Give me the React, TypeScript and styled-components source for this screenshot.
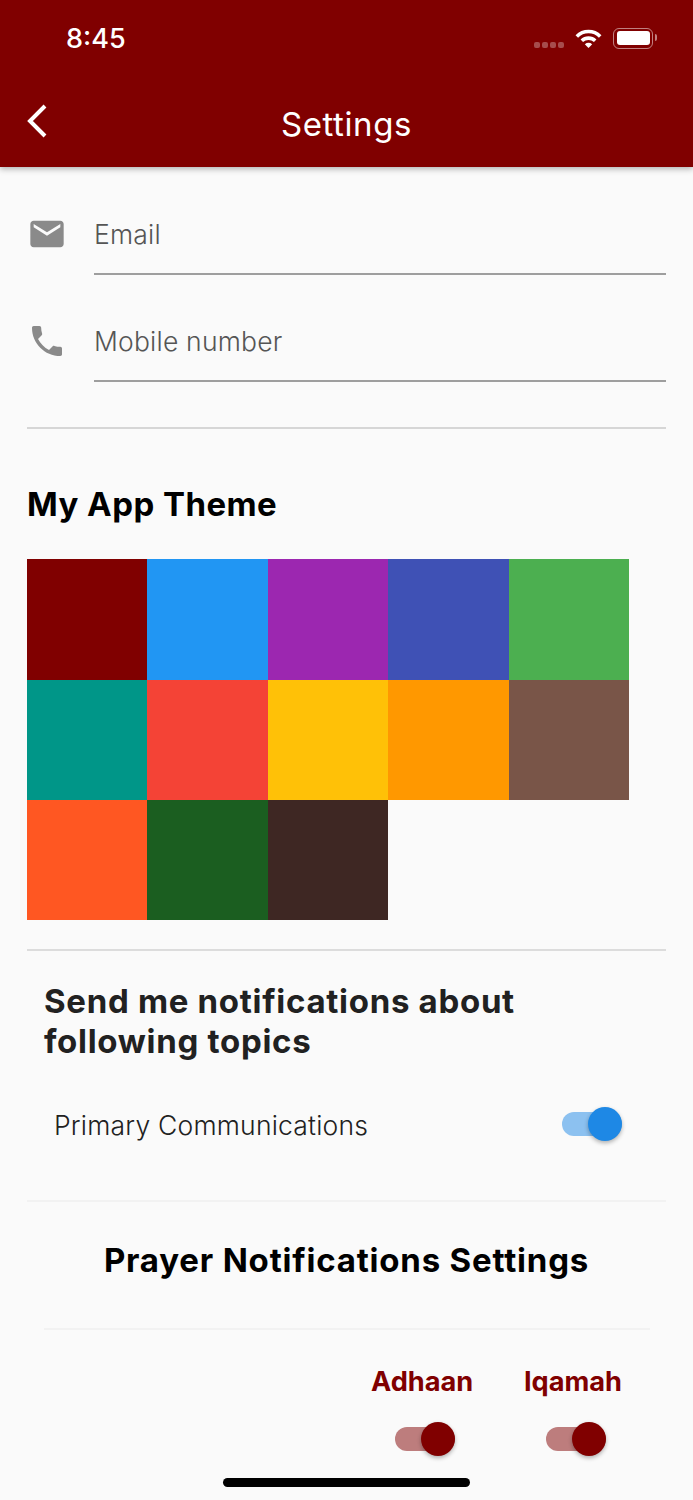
import React from 'react';
import styled, { createGlobalStyle } from 'styled-components';
import { MdEmail, MdPhone } from 'react-icons/md';

const MAROON = '#800000';
const BLUE = '#1e88e5';

const themeColors = [
    '#800000', '#2196f3', '#9c27b0', '#3f51b5', '#4caf50',
    '#009688', '#f44336', '#ffc107', '#ff9800', '#795548',
    '#ff5722', '#1b5e20', '#3e2723',
];

const Toggle: React.FC<{ color: string }> = ({ color }) => (
    <ToggleWrapper>
        <ToggleTrack $color={color} />
        <ToggleThumb $color={color} />
    </ToggleWrapper>
);

const Field: React.FC<{ icon: React.ReactNode; label: string }> = ({ icon, label }) => (
    <FieldRow>
        <FieldIcon>{icon}</FieldIcon>
        <FieldInput>{label}</FieldInput>
    </FieldRow>
);

const App: React.FC = () => {
    return (
        <Page>
            <GlobalStyle />
            <Header>
                <StatusBar>
                    <Time>8:45</Time>
                    <StatusIcons>
                        <Signal>
                            <i /><i /><i /><i />
                        </Signal>
                        <svg width="27" height="19" viewBox="0 0 27 19">
                            <path d="M1.800 7.400A16.500 16.500 0 0 1 25.200 7.400" fill="none" stroke="#fff" strokeWidth="3.600" />
                            <path d="M6.800 11.800A9.700 9.700 0 0 1 20.200 11.800" fill="none" stroke="#fff" strokeWidth="3.600" />
                            <path d="M13.500 19L9.800 15.200Q13.500 12.400 17.200 15.200Z" fill="#fff" />
                        </svg>
                        <Battery>
                            <BatteryFill />
                        </Battery>
                    </StatusIcons>
                </StatusBar>
                <Toolbar>
                    <BackIcon width="22" height="36" viewBox="0 0 22 36">
                        <path d="M19 3L4 18l15 15" fill="none" stroke="#fff" strokeWidth="4" />
                    </BackIcon>
                    <Title>Settings</Title>
                </Toolbar>
            </Header>

            <Content>
                <Field icon={<MdEmail />} label="Email" />
                <Field icon={<MdPhone />} label="Mobile number" />
                <Divider $top={45} $color="#d6d6d6" />

                <ThemeTitle>My App Theme</ThemeTitle>
                <Swatches>
                    {themeColors.map((color) => (
                        <Swatch key={color} $color={color} />
                    ))}
                </Swatches>
                <Divider $top={29} $color="#dcdcdc" />

                <TopicsTitle>Send me notifications about following topics</TopicsTitle>
                <TopicRow>
                    <TopicLabel>Primary Communications</TopicLabel>
                    <Toggle color={BLUE} />
                </TopicRow>
                <Divider $top={0} $color="#f2f2f2" />

                <PrayerTitle>Prayer Notifications Settings</PrayerTitle>
                <InnerDivider />
                <PrayerHead>
                    <PrayerColumn>Adhaan</PrayerColumn>
                    <PrayerColumn>Iqamah</PrayerColumn>
                </PrayerHead>
                <PrayerToggles>
                    <ToggleCell>
                        <Toggle color={MAROON} />
                    </ToggleCell>
                    <ToggleCell>
                        <Toggle color={MAROON} />
                    </ToggleCell>
                </PrayerToggles>
            </Content>
            <HomeIndicator />
        </Page>
    );
};

export default App;

const GlobalStyle = createGlobalStyle`
    html, body {
        margin: 0;
        padding: 0;
        background: #fafafa;
    }
`;

const Page = styled.div`
    position: relative;
    width: 693px;
    height: 1500px;
    overflow: hidden;
    background: #fafafa;
    font-family: Inter, Roboto, "Liberation Sans", sans-serif;
    color: #212121;
`;

const Header = styled.header`
    height: 167px;
    background: ${MAROON};
    box-shadow: 0 2px 6px rgba(0, 0, 0, 0.3);
    color: #fff;
`;

const StatusBar = styled.div`
    height: 76px;
    box-sizing: border-box;
    display: flex;
    align-items: center;
    justify-content: space-between;
    padding: 0 40px 0 66px;
`;

const Time = styled.span`
    font-size: 27px;
    font-weight: 500;
`;

const StatusIcons = styled.div`
    display: flex;
    align-items: center;
    gap: 11px;
`;

const Signal = styled.div`
    display: flex;
    gap: 2px;
    margin-top: 14px;
    i {
        display: block;
        width: 6px;
        height: 6px;
        border-radius: 2px;
        background: rgba(255, 255, 255, 0.3);
    }
`;

const Battery = styled.div`
    position: relative;
    width: 40px;
    height: 21px;
    box-sizing: border-box;
    padding: 2.5px;
    border: 1.5px solid rgba(255, 255, 255, 0.5);
    border-radius: 6px;
    &::after {
        content: '';
        position: absolute;
        right: -5px;
        top: 5px;
        width: 2px;
        height: 7px;
        border-radius: 0 2px 2px 0;
        background: rgba(255, 255, 255, 0.5);
    }
`;

const BatteryFill = styled.div`
    height: 100%;
    background: #fff;
    border-radius: 3px;
`;

const Toolbar = styled.div`
    position: relative;
    height: 91px;
    display: flex;
    align-items: center;
    justify-content: center;
`;

const BackIcon = styled.svg`
    position: absolute;
    left: 26px;
    top: 27px;
`;

const Title = styled.h1`
    margin: 5px 0 0;
    font-size: 33px;
    font-weight: 400;
    letter-spacing: 0.6px;
`;

const Content = styled.main`
    padding: 1px 27px 0;
`;

const FieldRow = styled.div`
    display: flex;
    height: 107px;
    align-items: flex-end;
`;

const FieldIcon = styled.div`
    width: 67px;
    height: 107px;
    padding: 46px 0 0 0;
    box-sizing: border-box;
    color: #8a8a8a;
    font-size: 40px;
    svg {
        display: block;
    }
`;

const FieldInput = styled.div`
    flex: 1;
    height: 62px;
    box-sizing: border-box;
    border-bottom: 2px solid #9e9e9e;
    font-size: 26.5px;
    font-weight: 300;
    letter-spacing: 0.2px;
    line-height: 42px;
    color: #555;
`;

const Divider = styled.hr<{ $top: number; $color: string }>`
    margin: ${(p) => p.$top}px 0 0;
    border: 0;
    border-top: 2px solid ${(p) => p.$color};
`;

const ThemeTitle = styled.h2`
    margin: 55px 0 34.2px 0;
    font-size: 33px;
    line-height: 41px;
    font-weight: 700;
    letter-spacing: 0.45px;
    color: #000;
`;

const Swatches = styled.div`
    display: grid;
    grid-template-columns: repeat(5, 120.4px);
    grid-auto-rows: 120.4px;
`;

const Swatch = styled.div<{ $color: string }>`
    background: ${(p) => p.$color};
`;

const TopicsTitle = styled.h2`
    margin: 30px 100px 0 17px;
    font-size: 33px;
    line-height: 40px;
    font-weight: 700;
    letter-spacing: 0.7px;
`;

const TopicRow = styled.div`
    height: 139px;
    box-sizing: border-box;
    padding: 0 44px 13px 27px;
    display: flex;
    align-items: center;
    justify-content: space-between;
`;

const TopicLabel = styled.span`
    margin-top: 1px;
    font-size: 26.5px;
    font-weight: 300;
    letter-spacing: 0.2px;
`;

const ToggleWrapper = styled.div`
    position: relative;
    width: 60px;
    height: 34px;
`;

const ToggleTrack = styled.div<{ $color: string }>`
    position: absolute;
    left: 0;
    right: 0;
    top: 5px;
    height: 24px;
    border-radius: 12px;
    background: ${(p) => p.$color};
    opacity: 0.5;
`;

const ToggleThumb = styled.div<{ $color: string }>`
    position: absolute;
    right: 0;
    top: 0;
    width: 34px;
    height: 34px;
    border-radius: 50%;
    background: ${(p) => p.$color};
    box-shadow: 0 2px 4px rgba(0, 0, 0, 0.3);
`;

const PrayerTitle = styled.h2`
    margin: 38px 0 0;
    font-size: 33px;
    line-height: 41px;
    font-weight: 700;
    letter-spacing: 0.8px;
    color: #000;
    text-align: center;
`;

const InnerDivider = styled.hr`
    margin: 47px 16px 0 17px;
    border: 0;
    border-top: 2px solid #f2f2f2;
`;

const PrayerHead = styled.div`
    display: flex;
    justify-content: flex-end;
    gap: 52px;
    margin: 36px 43px 0 0;
`;

const PrayerColumn = styled.span`
    width: 100px;
    font-size: 27.2px;
    line-height: 32px;
    font-weight: 700;
    color: ${MAROON};
    text-align: center;
`;

const PrayerToggles = styled.div`
    display: flex;
    justify-content: flex-end;
    margin: 24px 60px 0 0;
    gap: 91px;
`;

const ToggleCell = styled.div`
    display: flex;
`;

const HomeIndicator = styled.div`
    position: absolute;
    left: 223px;
    top: 1478px;
    width: 247px;
    height: 9px;
    border-radius: 5px;
    background: #000;
`;
